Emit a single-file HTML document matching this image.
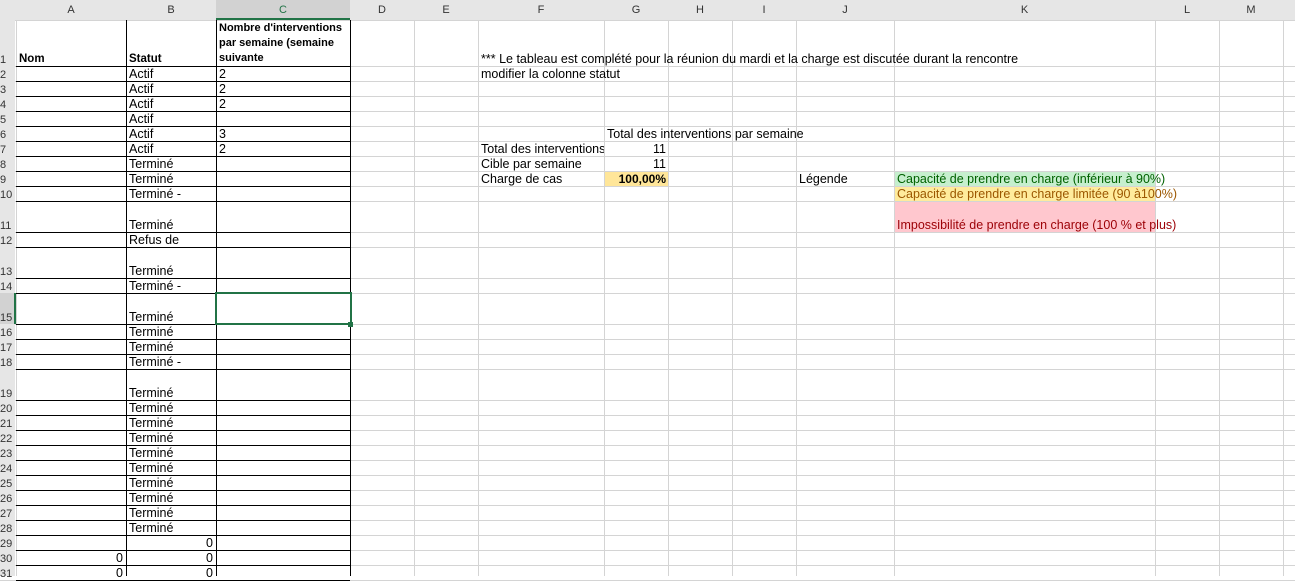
<!DOCTYPE html>
<html><head><meta charset="utf-8"><style>
body{margin:0;width:1295px;height:576px;overflow:hidden;background:#fff;font-family:"Liberation Sans",sans-serif;font-size:12.5px;color:#000;position:relative}
.a{position:absolute;box-sizing:border-box;white-space:nowrap;overflow:visible}
</style></head><body>
<script>
const cols=[16,126,216,350,414,478,604,668,732,796,894,1155,1219,1283,1295];
const names="ABCDEFGHIJKLM".split("");
const rows=[20,66];
const hts=[15,15,15,15,15,15,15,15,15,31,15,31,15,31,15,15,15,31,15,15,15,15,15,15,15,15,15,15,15,15];
hts.forEach(h=>rows.push(rows[rows.length-1]+h));
let o="";
const d=(x,y,w,h,s,t="")=>o+=`<div class="a" style="left:${x}px;top:${y}px;width:${w}px;height:${h}px;${s}">${t}</div>`;
d(604,171,64,15,"background:#ffe699");
d(894,171,261,15,"background:#c6efce");
d(894,186,261,15,"background:#ffeb9c");
d(894,201,261,31,"background:#ffc7ce");
for(let i=0;i<cols.length;i++)d(cols[i],20,1,556,"background:#d4d4d4");
for(let r of rows)d(0,r,1295,1,"background:#d4d4d4");
d(0,0,1295,20,"background:#e6e6e6");
d(216,0,134,20,"background:#d2d2d2");
d(216,18,134,2,"background:#217346");
for(let i=0;i<13;i++)d(cols[i],0,cols[i+1]-cols[i],20,"line-height:20px;color:"+(i==2?"#217346":"#333")+";text-align:center;font-size:11px",names[i]);
d(0,20,15,556,"background:#e6e6e6");
d(0,293,15,31,"background:#d2d2d2");
d(14,293,2,31,"background:#217346");
for(let r=0;r<31;r++){d(0,rows[r]+1,16,rows[r+1]-rows[r],"font-size:11px;color:#333;display:flex;align-items:flex-end;line-height:14px",String(r+1));}
for(let x of [126,216,350])d(x,20,1,556,"background:#000");
for(let i=1;i<rows.length;i++)d(16,rows[i],334,1,"background:#000");
d(215,292,137,33,"border:2px solid #217346");
d(348,322,5,5,"background:#217346");
const tb=(x,y,h,t,s="")=>d(x,y+1,200,h,"display:flex;align-items:flex-end;line-height:15px;"+s,t);
tb(19,20,46,"Nom","font-weight:bold;font-size:11.5px");
tb(129,20,46,"Statut","font-weight:bold;font-size:11.5px");
d(219,21,130,45,"font-weight:bold;line-height:15px;white-space:normal;font-size:11px","Nombre d'interventions par semaine (semaine suivante");
const st=["Actif","Actif","Actif","Actif","Actif","Actif","Terminé","Terminé","Terminé -","Terminé","Refus de","Terminé","Terminé -","Terminé","Terminé","Terminé","Terminé -","Terminé","Terminé","Terminé","Terminé","Terminé","Terminé","Terminé","Terminé","Terminé","Terminé"];
const cv=["2","2","2","","3","2"];
st.forEach((s,i)=>{const r=i+1;const h=rows[r+1]-rows[r];
 if(s=="Refus de")d(129,rows[r]+1,90,15,"line-height:15px",s);else tb(129,rows[r],h,s);
 if(cv[i])tb(219,rows[r],h,cv[i]);});
const L="line-height:16px;";
d(126,535,87,15,"text-align:right;"+L,"0");
d(16,550,107,15,"text-align:right;"+L,"0");
d(126,550,87,15,"text-align:right;"+L,"0");
d(16,565,107,15,"text-align:right;"+L,"0");
d(126,565,87,15,"text-align:right;"+L,"0");
d(481,51,700,15,L,"*** Le tableau est complété pour la réunion du mardi et la charge est discutée durant la rencontre");
d(481,66,600,15,L,"modifier la colonne statut");
d(607,126,300,15,L,"Total des interventions par semaine");
d(481,141,123,15,L+"overflow:hidden","Total des interventions");
d(604,141,62,15,L+"text-align:right","11");
d(481,156,123,15,L,"Cible par semaine");
d(604,156,62,15,L+"text-align:right","11");
d(481,171,123,15,L,"Charge de cas");
d(604,171,62,15,L+"text-align:right;font-weight:bold;font-size:12px","100,00%");
d(799,171,90,15,L,"Légende");
d(897,171,300,15,L+"color:#006100","Capacité de prendre en charge (inférieur à 90%)");
d(897,186,300,15,L+"color:#9c5700","Capacité de prendre en charge limitée (90 à100%)");
d(897,217,300,15,L+"color:#9c0006","Impossibilité de prendre en charge (100 % et plus)");
document.write(o);
</script>
</body></html>
